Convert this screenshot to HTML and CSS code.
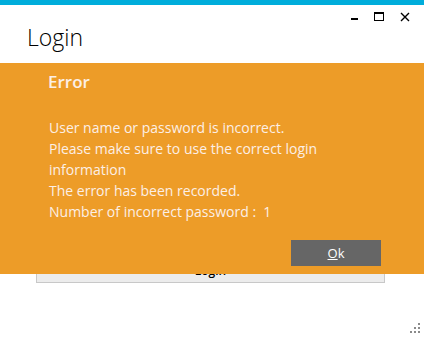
FILE: index.html
```
<!DOCTYPE html>
<html lang="en">
<head>
    <meta charset="UTF-8">
    <meta name="viewport" content="width=device-width, initial-scale=1.0">
    <title>Login</title>
    <link rel="stylesheet" href="styles.css">
</head>
<body>
    <div class="window">
        <div class="titlebar">
            <h1 class="title">Login</h1>
            <div class="controls">
                <span class="ctl ctl-min"></span>
                <span class="ctl ctl-max"></span>
                <svg class="ctl-close" width="10" height="10" viewBox="0 0 10 10">
                    <path d="M1 1 L9 9 M9 1 L1 9" stroke="#000" stroke-width="1.4" fill="none"/>
                </svg>
            </div>
        </div>
        <div class="content">
            <button class="login-btn">Login</button>
        </div>
        <div class="grip">
            <i></i><i></i><i></i><i></i><i></i><i></i>
        </div>

        <div class="overlay">
            <div class="dialog">
                <h2>Error</h2>
                <p class="message">
                    User name or password is incorrect.<br>
                    Please make sure to use the correct login<br>
                    information<br>
                    The error has been recorded.<br>
                    Number of incorrect password :&nbsp; 1
                </p>
                <div class="actions">
                    <button class="ok-btn"><u>O</u>k</button>
                </div>
            </div>
        </div>
    </div>
</body>
</html>
```

FILE: styles.css
```
body {
    margin: 0;
    font-family: "Open Sans", sans-serif;
    background: white;
}
.window {
    position: relative;
    width: 424px;
    height: 337px;
    border-top: 5px solid #00addb;
    box-sizing: border-box;
    overflow: hidden;
}
.titlebar {
    display: flex;
    justify-content: space-between;
    align-items: flex-start;
    padding: 0 14px 0 27px;
    height: 58px;
}
.title {
    margin: 17px 0 0 0;
    font-size: 23px;
    font-weight: 300;
    color: #000;
    line-height: 30px;
}
.controls {
    display: flex;
    align-items: flex-start;
    gap: 16px;
    padding-top: 7px;
}
.ctl {
    display: block;
    box-sizing: border-box;
}
.ctl-min {
    width: 7px;
    height: 2px;
    background: #000;
    margin-top: 6px;
}
.ctl-max {
    width: 10px;
    height: 9px;
    border: 1px solid #000;
    border-top-width: 2px;
}
.ctl-close {
    display: block;
}
.content {
    display: flex;
    padding: 195px 0 0 36px;
}
.login-btn {
    width: 349px;
    height: 25px;
    background: #ececec;
    border: 1px solid #c8c8c8;
    border-top: none;
    font-family: "Open Sans", sans-serif;
    font-size: 12px;
    font-weight: 600;
    padding: 0;
}
.grip {
    position: absolute;
    right: 4px;
    bottom: 4px;
    width: 10px;
    height: 10px;
}
.grip i {
    position: absolute;
    width: 2px;
    height: 2px;
    background: #8a8a8a;
}
.grip i:nth-child(1) { left: 8px; top: 0; }
.grip i:nth-child(2) { left: 4px; top: 4px; }
.grip i:nth-child(3) { left: 8px; top: 4px; }
.grip i:nth-child(4) { left: 0; top: 8px; }
.grip i:nth-child(5) { left: 4px; top: 8px; }
.grip i:nth-child(6) { left: 8px; top: 8px; }
.overlay {
    position: absolute;
    left: 0;
    right: 0;
    top: 58px;
    height: 211px;
    background: #ed9c28;
}
.dialog {
    padding: 6px 43px 0 48px;
    color: #fcefe6;
}
.dialog h2 {
    margin: 0;
    font-size: 17px;
    font-weight: 600;
    line-height: 26px;
}
.message {
    margin: 22px 0 0 1px;
    font-size: 14px;
    line-height: 21px;
}
.actions {
    display: flex;
    justify-content: flex-end;
    margin-top: 18px;
}
.ok-btn {
    width: 90px;
    height: 26px;
    background: #666;
    color: #fff;
    border: none;
    font-family: "Open Sans", sans-serif;
    font-size: 13px;
    padding: 0;
}
```
